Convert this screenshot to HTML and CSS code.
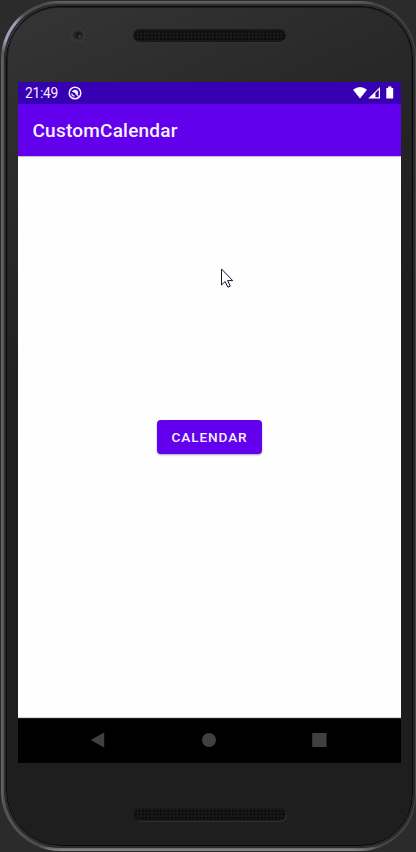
FILE: index.html
```html
<!DOCTYPE html>
<html lang="en">
<head>
<meta charset="utf-8">
<title>CustomCalendar</title>
<link rel="stylesheet" href="styles.css">
</head>
<body>
<div class="phone">
  <div class="body">
    <div class="bezel">
      <svg class="camera" width="16" height="16" viewBox="0 0 16 16"><circle cx="8" cy="8" r="7.7" fill="#363636"/><circle cx="8" cy="8" r="5.3" fill="#2a2a2a"/><circle cx="8.3" cy="8" r="3.3" fill="#1b1b1b"/><circle cx="9.7" cy="9.5" r="1" fill="#55575b"/></svg>
      <div class="speaker"></div>
    </div>
    <div class="screen">
      <header class="status">
        <span class="time">21:49</span>
        <svg class="notice" width="14" height="14" viewBox="0 0 14 14" fill="none" stroke="#f4efff"><circle cx="7" cy="7" r="5.8" stroke-width="1.5"/><path d="M3.7 7.5Q4 10 6.6 10.2M7.5 7.3l3.6 3.6" stroke-width="1.2"/><path d="M3.9 5.7Q5 3.5 7.6 3.8 10.3 4.5 10.2 7.5L9.2 9 6.9 6.8z" fill="#f4efff" stroke="none"/></svg>
        <svg class="signals" width="42" height="14" viewBox="0 0 42 14" fill="#fff"><path d="M0 3.8Q7-1.8 14 3.8L7 12.5z"/><path fill-rule="evenodd" d="M15.2 12.5L27 .9v11.6zM22.4 6.9v4.4h3.4V3.6z"/><path d="M33.8 1.9h1.3V.6h3.3v1.3h1.3q.5 0 .5.5v9.7q0 .5-.5.5h-5.9q-.5 0-.5-.5V2.4q0-.5.5-.5z"/></svg>
      </header>
      <div class="appbar"><h1>CustomCalendar</h1></div>
      <main class="content">
        <button class="button" type="button">CALENDAR</button>
        <svg class="cursor" width="14" height="21" viewBox="0 0 14 21"><path d="M.5 1v16l3.6-3.5 2.8 5.7 2.4-1.1-2.7-5.5h5.1z" fill="#fff" stroke="#17142a"/></svg>
      </main>
      <nav class="nav">
        <svg width="16" height="16" viewBox="0 0 16 16"><path d="M.7 8L14.2.4v15.2z" fill="#404040"/></svg>
        <svg width="16" height="16" viewBox="0 0 16 16"><circle cx="8" cy="8" r="7" fill="#404040"/></svg>
        <svg width="16" height="16" viewBox="0 0 16 16"><rect x="1.2" y="1" width="14.3" height="14" rx=".7" fill="#404040"/></svg>
      </nav>
    </div>
    <div class="chin"><div class="speaker"></div></div>
  </div>
</div>
</body>
</html>
```
FILE: styles.css
```css
* { box-sizing: border-box; }
body {
  margin: 0;
  width: 416px;
  height: 852px;
  overflow: hidden;
  background: #2b2b2b;
  font-family: Roboto, "Liberation Sans", sans-serif;
}
.phone {
  width: 415px;
  height: 850px;
  margin: 1px 0 0 1px;
  padding: 5px 3px 5px 5px;
  border-radius: 58px 56px 56px 60px;
  background:
    radial-gradient(circle at 8px 30px, #a79bba 0, #a79bba 10px, transparent 22px),
    linear-gradient(90deg, #666 0, #555 3px, transparent 50px, transparent 350px, #444 100%),
    linear-gradient(180deg, #686868 0, #484848 3px, #484848 845px, #858585 849px);
}
.body {
  height: 840px;
  border: 1px solid #080808;
  border-radius: 53px 52px 52px 55px;
  background: linear-gradient(155deg, #353535 0, #282828 22%, #1e1e1e 45%, #1e1e1e 100%);
  box-shadow: 0 0 0 2px #2b2b2b, inset 0 0 0 1px #202020;
}
.bezel {
  position: relative;
  height: 75px;
  padding-top: 22px;
}
.camera {
  position: absolute;
  left: 63px;
  top: 20px;
}
.speaker {
  width: 153px;
  height: 13px;
  margin-left: 126px;
  border-radius: 7px;
  background-color: #191919;
  background-image: radial-gradient(circle, #080808 0 1px, transparent 1.5px);
  background-size: 3.6px 3.6px;
  background-position: 1px 1px;
  box-shadow: inset 0 0 0 1px #181818, 1px 1px 0 #303030;
}
.screen {
  width: 383px;
  height: 681px;
  margin-left: 11px;
  overflow: hidden;
  background: #fefefe;
}
.status {
  display: flex;
  align-items: center;
  height: 22px;
  padding: 0 7px;
  background: #3700b3;
  color: #f4efff;
}
.time {
  width: 43px;
  font-size: 13.8px;
  line-height: 22px;
  letter-spacing: -.25px;
}
.signals {
  margin-left: auto;
  margin-right: -1px;
}
.appbar {
  position: relative;
  display: flex;
  align-items: center;
  height: 52px;
  padding: 2px 14.5px 0;
  background: #6200ee;
  box-shadow: 0 1px 1px #c6c3cc;
}
h1 {
  margin: 0;
  color: #f7f2ff;
  font-size: 19px;
  font-weight: 500;
  line-height: 24px;
  letter-spacing: .22px;
}
.content {
  position: relative;
  display: flex;
  justify-content: center;
  align-items: center;
  height: 562px;
  border-bottom: 1px solid #d5d5d5;
}
.button {
  width: 105px;
  height: 34px;
  margin-right: 1px;
  padding: 1px 0 0 1px;
  border: 0;
  border-radius: 4px;
  background: #6200ee;
  color: #f7f2ff;
  font: 500 13.6px/20px Roboto, sans-serif;
  letter-spacing: .9px;
  box-shadow: 0 1px 2px #aaa4b6;
}
.cursor {
  position: absolute;
  left: 203px;
  top: 112px;
}
.nav {
  display: flex;
  justify-content: space-between;
  align-items: center;
  height: 45px;
  padding: 0 74px 2px 72px;
  background: #000;
  border-top: 1px solid #202020;
}
.chin { padding-top: 45px; }
```
